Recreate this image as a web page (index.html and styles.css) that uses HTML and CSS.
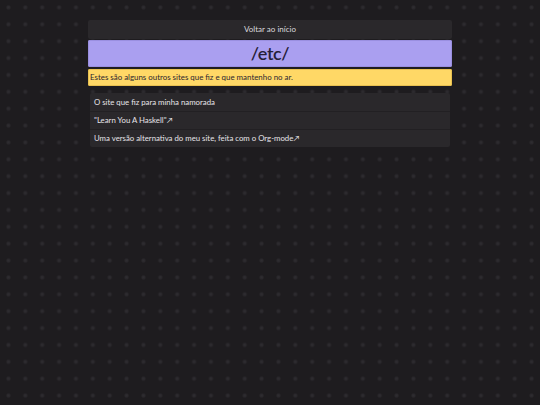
FILE: index.html
```html
<!DOCTYPE html>
<html lang="pt-BR">
<head>
<meta charset="utf-8">
<title>/etc/</title>
<link rel="stylesheet" href="styles.css">
</head>
<body>
<main class="page">
  <a class="back" href="#">Voltar ao início</a>
  <h1 class="title">/etc/</h1>
  <p class="note">Estes são alguns outros sites que fiz e que mantenho no ar.</p>
  <ul class="links">
    <li><a href="#">O site que fiz para minha namorada</a></li>
    <li><a href="#">"Learn You A Haskell"↗</a></li>
    <li><a href="#">Uma versão alternativa do meu site, feita com o Org-mode↗</a></li>
  </ul>
</main>
</body>
</html>
```

FILE: styles.css
```css
html, body {
  margin: 0;
  padding: 0;
}
body {
  background-color: #1e1c1f;
  background-image: radial-gradient(circle at center, #2e2c30 0, #2a282c 1.5px, rgba(30,28,31,0) 2.6px);
  background-size: 16.875px 16.875px;
  background-position: 0 -1px;
  min-height: 405px;
  font-family: Lato, "Open Sans", sans-serif;
  color: #e6e4e8;
}
.page {
  width: 364px;
  margin: 0 auto;
  padding-top: 20px;
  display: flex;
  flex-direction: column;
}
.back {
  display: block;
  background: #2a282b;
  color: #dcdade;
  text-decoration: none;
  text-align: center;
  font-size: 8px;
  line-height: 18px;
  height: 19px;
  border-radius: 2px;
}
.title {
  margin: 1px 0 0;
  background: #aa9ff0;
  color: #262038;
  font-weight: 600;
  font-size: 18px;
  letter-spacing: -0.4px;
  line-height: 27px;
  height: 27px;
  text-align: center;
  border-radius: 2px;
  box-shadow: inset 0 0 0 1px #9a8fe0;
}
.note {
  margin: 2px 0 0;
  background: #ffd866;
  color: #2b2630;
  font-size: 7.9px;
  line-height: 16px;
  height: 17px;
  padding: 0 2px;
  border-radius: 2px;
  box-shadow: inset 0 0 0 1px #e8c050;
}
.links {
  list-style: none;
  margin: 7px 2px 0;
  padding: 0;
  background: #2a282b;
  border-radius: 2px;
}
.links li {
  height: 17px;
  line-height: 17px;
  padding: 0 4px;
  font-size: 7.8px;
  border-top: 1px solid #222023;
}
.links li:first-child {
  border-top: none;
  height: 18px;
  line-height: 18px;
}
.links a {
  color: #e6e4e8;
  text-decoration: none;
}
```
